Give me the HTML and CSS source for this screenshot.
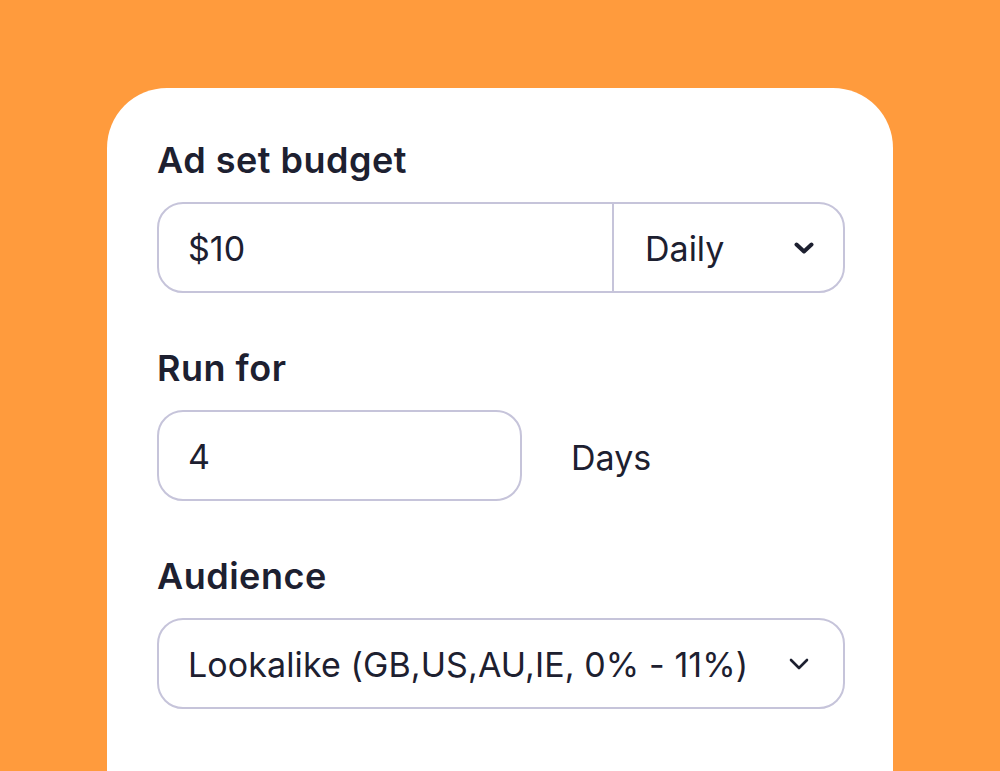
FILE: index.html
```html
<!DOCTYPE html>
<html>
<head>
<meta charset="utf-8">
<link rel="stylesheet" href="styles.css">
</head>
<body>
<div class="card">
  <div class="group">
    <div class="label">Ad set budget</div>
    <div class="field split">
      <div class="value main"><span>$10</span></div>
      <div class="value period"><span>Daily</span>
        <svg class="chev bold" viewBox="0 0 20 12" width="20" height="12"><path d="M2.5 2.5 L10 9.5 L17.5 2.5" fill="none" stroke="#1d2030" stroke-width="4" stroke-linecap="round" stroke-linejoin="round"/></svg>
      </div>
    </div>
  </div>
  <div class="group">
    <div class="label">Run for</div>
    <div class="row">
      <div class="field short"><span class="value">4</span></div>
      <div class="unit">Days</div>
    </div>
  </div>
  <div class="group">
    <div class="label">Audience</div>
    <div class="field">
      <span class="value grow">Lookalike (GB,US,AU,IE, 0% - 11%)</span>
      <svg class="chev thin" viewBox="0 0 20 12" width="20" height="12"><path d="M2 2 L10 10 L18 2" fill="none" stroke="#1d2030" stroke-width="2.6" stroke-linecap="round" stroke-linejoin="round"/></svg>
    </div>
  </div>
</div>
</body>
</html>
```
FILE: styles.css
```css
html, body {
  margin: 0;
  padding: 0;
}
body {
  background: #ff9b3d;
  height: 771px;
  overflow: hidden;
  font-family: Inter, "Liberation Sans", sans-serif;
  color: #1d2030;
  padding: 88px 0 0 107px;
  box-sizing: border-box;
}
.card {
  width: 786px;
  min-height: 720px;
  background: #fff;
  border-radius: 60px 60px 0 0;
  box-sizing: border-box;
  padding: 50px 48px 0 50px;
  display: flex;
  flex-direction: column;
  gap: 53px;
}
.group {
  display: flex;
  flex-direction: column;
  gap: 20px;
}
.label {
  font-size: 36px;
  line-height: 44px;
  font-weight: 600;
  letter-spacing: 0.5px;
}
.field {
  height: 91px;
  box-sizing: border-box;
  border: 2px solid #c6c4da;
  border-radius: 26px;
  display: flex;
  align-items: center;
  padding: 0 34px 0 29px;
  font-size: 34px;
}
.field.split {
  padding: 0;
}
.value {
  line-height: 40px;
  padding-top: 3px;
}
.value.main {
  flex: 1;
  padding-left: 29px;
  height: 100%;
  box-sizing: border-box;
  display: flex;
  align-items: center;
  border-right: 2px solid #c6c4da;
}
.value.period {
  width: 229px;
  box-sizing: border-box;
  padding: 0 29px 0 31px;
  display: flex;
  align-items: center;
  justify-content: space-between;
}
.value.period span {
  padding-top: 3px;
}
.value.grow {
  flex: 1;
  letter-spacing: 0.1px;
}
.row {
  display: flex;
  align-items: center;
  gap: 49px;
}
.field.short {
  width: 365px;
}
.unit {
  font-size: 34px;
  padding-top: 3px;
}
.chev {
  display: block;
  flex: none;
}
```
